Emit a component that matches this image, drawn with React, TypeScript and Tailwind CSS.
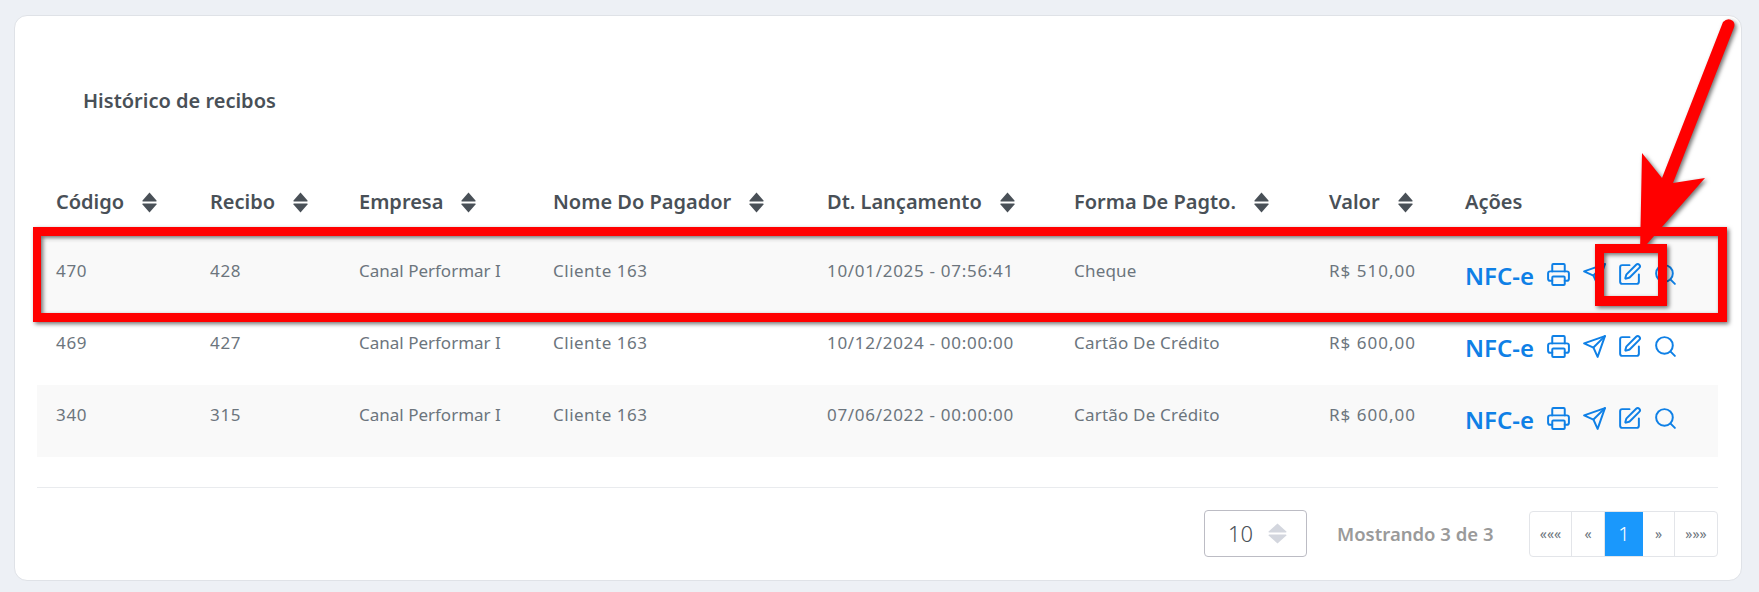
import React from 'react';
import { Printer, SquarePen, Search } from 'lucide-react';

// ─── Data ────────────────────────────────────────────────────────────────────

const COLUMNS = [
  { label: 'Código', width: 'w-[154px]', sort: true, cell: 'tracking-[0.7px]' },
  { label: 'Recibo', width: 'w-[149px]', sort: true, cell: 'tracking-[0.7px]' },
  { label: 'Empresa', width: 'w-[194px]', sort: true, cell: '' },
  { label: 'Nome Do Pagador', width: 'w-[274px]', sort: true, cell: 'tracking-[0.5px]' },
  { label: 'Dt. Lançamento', width: 'w-[247px]', sort: true, cell: 'tracking-[0.7px]' },
  { label: 'Forma De Pagto.', width: 'w-[255px]', sort: true, cell: 'tracking-[0.2px]' },
  { label: 'Valor', width: 'w-[136px]', sort: true, cell: 'tracking-[1px]' },
  { label: 'Ações', width: 'w-[272px]', sort: false, cell: '' },
];

const ROWS = [
  ['470', '428', 'Canal Performar I', 'Cliente 163', '10/01/2025 - 07:56:41', 'Cheque', 'R$ 510,00'],
  ['469', '427', 'Canal Performar I', 'Cliente 163', '10/12/2024 - 00:00:00', 'Cartão De Crédito', 'R$ 600,00'],
  ['340', '315', 'Canal Performar I', 'Cliente 163', '07/06/2022 - 00:00:00', 'Cartão De Crédito', 'R$ 600,00'],
];

const FONT = "font-['Noto_Sans',sans-serif]";

// ─── Small pieces ────────────────────────────────────────────────────────────

function SortArrows({ className = 'w-[15px] text-[#495057]' }: { className?: string }) {
  return (
    <svg viewBox="0 0 15 21" preserveAspectRatio="none" className={`h-[21px] shrink-0 ${className}`} fill="currentColor">
      <path d="M7.5 0.5 L14.5 8.5 Q15 9.5 14 9.5 H1 Q0 9.5 0.5 8.5 Z" />
      <path d="M7.5 20.5 L14.5 12.5 Q15 11.5 14 11.5 H1 Q0 11.5 0.5 12.5 Z" />
    </svg>
  );
}

function SendIcon() {
  return (
    <svg viewBox="0 0 24 24" className="w-[25px] h-[25px]" fill="none" stroke="currentColor" strokeWidth={1.9} strokeLinecap="round" strokeLinejoin="round">
      <path d="M22 2 11 13" />
      <path d="M22 2 15 22 11 13 2 9Z" />
    </svg>
  );
}

function Actions() {
  return (
    <div className="flex items-center text-[#0f80e6]">
      <span className="w-[71px] text-[24px] font-semibold leading-none mt-1 whitespace-nowrap">NFC-e</span>
      <div className="flex items-center gap-[10.5px] ml-[10px]">
        <Printer className="w-[25px] h-[25px]" strokeWidth={1.9} />
        <SendIcon />
        <SquarePen className="w-[25px] h-[25px]" strokeWidth={1.9} />
        <Search className="w-[25px] h-[25px]" strokeWidth={1.9} />
      </div>
    </div>
  );
}

// Red marks someone drew on top of the screenshot
function Annotation() {
  return (
    <svg
      className="absolute inset-0 w-full h-full pointer-events-none drop-shadow-[2px_2px_2px_rgba(0,0,0,0.55)]"
      viewBox="0 0 1759 592"
    >
      <path
        fill="#ff0000"
        fillRule="evenodd"
        d="M33 227H1727V322H33Z M41 236V313H1718V236Z"
      />
      <path
        fill="#ff0000"
        fillRule="evenodd"
        d="M1595 244H1667V306H1595Z M1604 253V296H1658V253Z"
      />
      <path
        fill="#ff0000"
        d="M1723 22 Q1728 17 1733 21 Q1736 24 1733 30 L1673 183 L1705 178 L1640 252 L1642 153 L1662 178 Z"
      />
    </svg>
  );
}

// ─── Main Component ──────────────────────────────────────────────────────────

export default function App() {
  return (
    <div className={`relative h-[592px] w-[1759px] overflow-hidden bg-[#edf0f5] pt-[15px] pl-[14px] ${FONT}`}>
      <div className="w-[1728px] h-[566px] bg-white rounded-[13px] border border-[#dfe2e7] px-[22px] flex flex-col">
        <h2 className="text-[20px] font-semibold text-[#495057] pl-[46px] mt-[72px] leading-[26px]">
          Histórico de recibos
        </h2>

        <table className="table-fixed w-[1681px] mt-[47px] border-collapse">
          <thead>
            <tr className="h-[80px]">
              {COLUMNS.map((col) => (
                <th key={col.label} className={`${col.width} pl-[19px] pt-[2px] text-left font-semibold text-[20px] text-[#495057]`}>
                  <div className="flex items-center gap-[18px]">
                    <span>{col.label}</span>
                    {col.sort && <SortArrows />}
                  </div>
                </th>
              ))}
            </tr>
          </thead>
          <tbody>
            {ROWS.map((row, i) => (
              <tr key={row[0]} className={`h-[72px] ${i % 2 === 0 ? 'bg-[#f9f9f9]' : 'bg-white'}`}>
                {row.map((cell, j) => (
                  <td key={j} className={`pl-[19px] pb-[12px] text-[17px] text-[#6c757d] ${COLUMNS[j].cell}`}>{cell}</td>
                ))}
                <td className="pl-[19px] pb-[6px]"><Actions /></td>
              </tr>
            ))}
          </tbody>
        </table>

        <div className="border-t border-[#e9ebee] mt-[30px] w-[1681px] flex items-center justify-end pt-[22px]">
          <div className="w-[103px] h-[47px] border border-[#bcbcc4] rounded-[4px] flex items-center pl-[23px] gap-[15px] text-[22px] font-light text-[#495057]">
            <span>10</span>
            <SortArrows className="w-[19px] text-[#d3d6de]" />
          </div>
          <span className="w-[192px] ml-[30px] text-[18.5px] font-semibold text-[#9a9a9a] whitespace-nowrap">Mostrando 3 de 3</span>
          <div className="flex h-[46px] w-[189px] border border-[#e3e5e9] rounded-[4px] text-[14px] text-[#6c757d] overflow-hidden">
            <span className="w-[42px] flex items-center justify-center border-r border-[#e3e5e9]">«««</span>
            <span className="w-[33px] flex items-center justify-center border-r border-[#e3e5e9]">«</span>
            <span className="w-[38px] flex items-center justify-center bg-[#1a98fc] text-white text-[20px] font-light">1</span>
            <span className="w-[32px] flex items-center justify-center border-r border-[#e3e5e9]">»</span>
            <span className="flex-1 flex items-center justify-center">»»»</span>
          </div>
        </div>
      </div>
      <Annotation />
    </div>
  );
}
